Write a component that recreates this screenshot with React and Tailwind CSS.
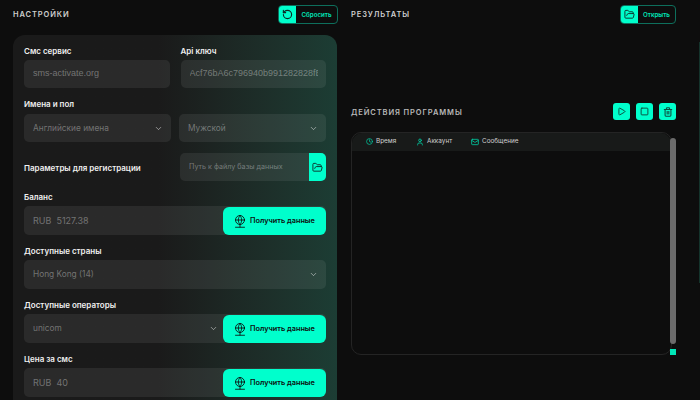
import React from "react";
import { RotateCcw, FolderOpen, ChevronDown, Play, Square, Trash2, Clock, User, Mail } from "lucide-react";

function GlobeStand() {
  return (
    <svg width="12" height="13" viewBox="0 0 24 26" fill="none" stroke="currentColor" strokeWidth="1.7" strokeLinecap="round" className="shrink-0">
      <circle cx="12" cy="10" r="9" />
      <path d="M3 10h18M12 1c-4.5 5.5-4.5 12.5 0 18c4.5-5.5 4.5-12.5 0-18M12 19v5M3 24.5h18" />
    </svg>
  );
}

function Label({ children, className = "" }) {
  return <div className={`h-4 leading-[18px] text-[8px] font-semibold text-[#f0f0f0] ${className}`}>{children}</div>;
}

function Field({ children, arial, size = "text-[9px]", height = "h-[28px]", className = "" }) {
  return (
    <div className={`${height} ${size} flex items-center pl-[9px] pr-2 rounded-[5px] bg-white/[0.07] text-white/35 whitespace-nowrap ${arial ? "font-['Liberation_Sans',sans-serif]" : ""} ${className}`}>
      {children}
    </div>
  );
}

function Select({ children, height, className = "" }) {
  return (
    <Field height={height} size="text-[8.3px]" className={`justify-between ${className}`}>
      <span>{children}</span>
      <ChevronDown size={9} strokeWidth={2.5} className="text-white/50" />
    </Field>
  );
}

function GetButton() {
  return (
    <button className="absolute right-0 top-[1px] bottom-0 w-[103px] flex items-center justify-center gap-[4px] rounded-[6px] bg-[#00ffcc] text-[7.3px] font-semibold text-[#0d0d0d]">
      <GlobeStand />
      Получить данные
    </button>
  );
}

function HeadButton({ icon, text }) {
  return (
    <button className="h-[19px] flex items-stretch rounded-[4px] border border-[#0d6f5c] overflow-hidden">
      <span className="w-[17px] flex items-center justify-center bg-[#00ffcc] text-[#0d2a25]">{icon}</span>
      <span className="flex-1 flex items-center justify-center text-[6.2px] font-semibold text-[#00e6b8]">{text}</span>
    </button>
  );
}

function SquareButton({ children }) {
  return <button className="w-[17px] h-[17px] flex items-center justify-center rounded-[3px] bg-[#00ffcc] text-[#0d4a3d]">{children}</button>;
}

function Column({ icon, text, className = "" }) {
  return (
    <div className={`flex items-center gap-[3px] text-[6.4px] text-[#d0d0d0] ${className}`}>
      <span className="text-[#00c9a0]">{icon}</span>
      {text}
    </div>
  );
}

export default function App() {
  return (
    <div className="h-screen overflow-hidden flex bg-[#0d0d0d] font-['Inter',sans-serif]">
      <div className="w-[338px] pl-[13px] shrink-0">
        <div className="h-[35px] flex items-start justify-between pt-[5px]">
          <h2 className="mt-[1px] text-[7.5px] leading-[18px] font-semibold tracking-[0.12em] text-[#cfcfcf]">НАСТРОЙКИ</h2>
          <div className="w-[60px] grid">
            <HeadButton icon={<RotateCcw size={11} strokeWidth={2.5} />} text="Сбросить" />
          </div>
        </div>

        <div className="w-[324px] h-[400px] rounded-[12px] bg-linear-to-r from-[#1a1a1a] from-45% to-[#1c3d34] px-[11px] pt-[7px]">
          <div className="grid grid-cols-2 gap-x-[11px]">
            <div>
              <Label className="mb-[2px]">Смс сервис</Label>
              <Field arial>sms-activate.org</Field>
            </div>
            <div>
              <Label className="mb-[2px]">Api ключ</Label>
              <Field arial><span className="block overflow-hidden">Acf76bA6c796940b991282828fE</span></Field>
            </div>
          </div>

          <Label className="mt-[7px] mb-[3px]">Имена и пол</Label>
          <div className="flex gap-2">
            <Select className="w-[147px]">Английские имена</Select>
            <Select className="w-[147px]">Мужской</Select>
          </div>

          <div className="mt-[11px] flex items-center justify-between">
            <Label>Параметры для регистрации</Label>
            <div className="relative w-[146px]">
              <Field size="text-[7.2px]">Путь к файлу базы данных</Field>
              <button className="absolute right-0 top-0 h-full w-[17px] flex items-center justify-center rounded-r-[5px] bg-[#00ffcc] text-[#0d2a25]">
                <FolderOpen size={11} />
              </button>
            </div>
          </div>

          <Label className="mt-[7px] mb-[2px]">Баланс</Label>
          <div className="relative">
            <Field height="h-[29px]">RUB&nbsp;&nbsp;5127.38</Field>
            <GetButton />
          </div>

          <Label className="mt-[7px] mb-[2px]">Доступные страны</Label>
          <Select height="h-[29px]">Hong Kong (14)</Select>

          <Label className="mt-[7px] mb-[2px]">Доступные операторы</Label>
          <div className="relative">
            <Select height="h-[29px]" className="pr-[108px]">unicom</Select>
            <GetButton />
          </div>

          <Label className="mt-[7px] mb-[2px]">Цена за смс</Label>
          <div className="relative">
            <Field height="h-[29px]">RUB&nbsp;&nbsp;40</Field>
            <GetButton />
          </div>
        </div>
      </div>

      <div className="w-[325px] ml-[13px] shrink-0 flex flex-col">
        <div className="h-[98px] flex items-start justify-between pt-[5px]">
          <h2 className="mt-[1px] text-[7.5px] leading-[18px] font-semibold tracking-[0.12em] text-[#cfcfcf]">РЕЗУЛЬТАТЫ</h2>
          <div className="w-[56px] grid">
            <HeadButton icon={<FolderOpen size={11} />} text="Открыть" />
          </div>
        </div>

        <div className="h-[34px] flex items-start justify-between pt-[5px]">
          <h2 className="mt-[1px] text-[7.5px] leading-[17px] font-semibold tracking-[0.12em] text-[#b8b8b8]">ДЕЙСТВИЯ ПРОГРАММЫ</h2>
          <div className="flex gap-[6px]">
            <SquareButton><Play size={9} strokeWidth={2.5} /></SquareButton>
            <SquareButton><Square size={9} strokeWidth={2.5} /></SquareButton>
            <SquareButton><Trash2 size={10} strokeWidth={2.5} /></SquareButton>
          </div>
        </div>

        <div className="relative w-[321px] h-[223px] rounded-[10px] border border-[#242424]">
          <div className="h-[18px] flex items-center pl-[14px] rounded-t-[10px] bg-[#181a19]">
            <Column icon={<Clock size={7} strokeWidth={2.5} />} text="Время" className="w-[50px]" />
            <Column icon={<User size={8} strokeWidth={2.5} />} text="Аккаунт" className="w-[55px]" />
            <Column icon={<Mail size={8} strokeWidth={2.5} />} text="Сообщение" />
          </div>
          <div className="absolute left-[318px] top-[5px] w-[6px] h-[206px] rounded-full bg-[#6b6b6b]" />
          <div className="absolute left-[318px] top-[216px] w-[6px] h-[6px] bg-[#00e6b8]" />
        </div>
      </div>

      <div className="ml-auto w-[1px] h-[241px] mt-[42px] bg-[#14332b]" />
    </div>
  );
}
